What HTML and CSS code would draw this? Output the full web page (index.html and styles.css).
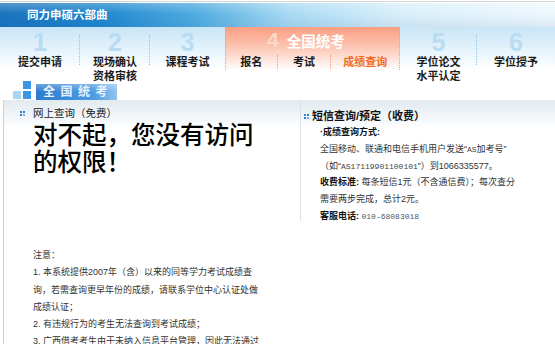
FILE: index.html
```html
<!DOCTYPE html>
<html lang="zh-CN">
<head>
    <meta charset="UTF-8">
    <meta name="viewport" content="width=device-width, initial-scale=1.0">
    <title>成绩查询</title>
    <link rel="stylesheet" href="styles.css">
</head>
<body>

    <div class="topbar">
        <div class="bar"><span class="title">同力申硕六部曲</span></div>
    </div>

    <div class="steps">
        <div class="step w1 sep">
            <div class="num">1</div>
            <div class="label">提交申请</div>
        </div>
        <div class="step w2 sep">
            <div class="num">2</div>
            <div class="label">现场确认<br>资格审核</div>
        </div>
        <div class="step w3">
            <div class="num">3</div>
            <div class="label">课程考试</div>
        </div>
        <div class="step step-cur">
            <div class="cur-title"><span class="num">4</span>全国统考</div>
            <div class="subs">
                <span class="sub">报名</span>
                <span class="sub">考试</span>
                <span class="sub on">成绩查询</span>
            </div>
        </div>
        <div class="step w5 sep">
            <div class="num">5</div>
            <div class="label">学位论文<br>水平认定</div>
        </div>
        <div class="step w6">
            <div class="num">6</div>
            <div class="label">学位授予</div>
        </div>
    </div>

    <div class="section-title">
        <span class="blocks"><i></i><i class="light"></i><i></i></span>
        <span class="title-box">全国统考</span>
    </div>

    <div class="content">
        <div class="col-left">
            <h3 class="box-head"><span class="dot"></span>网上查询（免费）</h3>
            <p class="denied">对不起，您没有访问的权限！</p>

            <div class="notes">
                注意：<br>
                1. 本系统提供2007年（含）以来的同等学力考试成绩查询，若需查询更早年份的成绩，请联系学位中心认证处做成绩认证；<br>
                2. 有违规行为的考生无法查询到考试成绩；<br>
                3. 广西借考考生由于未纳入信息平台管理，因此无法通过
            </div>
        </div>

        <div class="col-right">
            <h3 class="box-head big"><span class="dot"></span>短信查询/预定（收费）</h3>
            <div class="sms">
                <p><b>·成绩查询方式:</b></p>
                <p>全国移动、联通和电信手机用户发送“<span class="mono">AS</span>加考号”</p>
                <p>（如“<span class="mono">AS17119901100101</span>”）到1066335577。</p>
                <p><b>收费标准:</b> 每条短信1元（不含通信费）；每次查分需要两步完成，总计2元。</p>
                <p><b>客服电话:</b> <span class="mono tel">010-68083018</span></p>
            </div>
        </div>
    </div>

</body>
</html>
```

FILE: styles.css
```css
body {
    margin: 0;
    font-family: "Liberation Sans", "Noto Sans CJK SC", sans-serif;
    color: #333;
    background: #fff;
    width: 555px;
    overflow: hidden;
}

/* top title bar */
.topbar {
    margin-top: 1px;
    border-top: 1px solid #d4d4d4;
    padding-top: 1px;
}
.bar {
    height: 24px;
    background:
        linear-gradient(rgba(255, 255, 255, 0.25), rgba(255, 255, 255, 0) 45%, rgba(0, 60, 140, 0.08)),
        linear-gradient(to right, #1a74bd 0%, #1f88cf 18%, #4fabe0 35%, #a9daf3 52%, #d9effa 72%, #eef8fd 100%);
}
.title {
    display: inline-block;
    margin-left: 27px;
    line-height: 24px;
    font-size: 11.5px;
    font-weight: bold;
    color: #fff;
}

/* steps */
.steps {
    display: flex;
    height: 53px;
    background: linear-gradient(#c8e5f6, #e3f2fb 40%, #fff 80%);
}
.step {
    position: relative;
    box-sizing: border-box;
    text-align: center;
}
.w1 { width: 80px; }
.w2 { width: 70px; }
.w3 { width: 75px; }
.w5 { width: 77px; }
.w6 { width: 78px; }
.sep::after {
    content: "";
    position: absolute;
    right: 0;
    top: 8px;
    height: 30px;
    border-right: 1px dotted #95c3df;
}
.num {
    height: 28px;
    padding-top: 2px;
    box-sizing: border-box;
    font-size: 25px;
    line-height: 26px;
    font-weight: bold;
    color: #b9dcf2;
}
.label {
    font-size: 11px;
    font-weight: bold;
    line-height: 14px;
    color: #1a1a1a;
}

.step-cur {
    width: 175px;
    border-left: 1px dotted #f29c7c;
    border-right: 1px dotted #f29c7c;
    height: 43px;
    background: linear-gradient(#fa9e82, #fcbfac 40%, #fde4db 75%, #fff);
}
.cur-title {
    height: 28px;
    line-height: 28px;
    font-size: 14.5px;
    font-weight: bold;
    color: #fff;
    text-align: left;
    padding-left: 41px;
}
.cur-title .num {
    display: inline;
    font-size: 21px;
    color: #fcd8ca;
    margin-right: 8px;
}
.subs {
    display: flex;
}
.sub {
    font-size: 11px;
    font-weight: bold;
    line-height: 14px;
    color: #1a1a1a;
    text-align: center;
}
.sub:nth-child(1) { width: 51px; }
.sub:nth-child(2) { width: 53px; border-left: 1px dotted #f29c7c; }
.sub:nth-child(3) { width: 68px; border-left: 1px dotted #f29c7c; }
.sub.on { color: #f26a1b; }

/* section title */
.section-title {
    display: flex;
    align-items: flex-end;
    height: 20px;
    padding-left: 13px;
}
.blocks {
    display: grid;
    grid-template-columns: 8px 8px;
    grid-template-rows: 8px 8px;
    gap: 2px;
    width: 18px;
    margin-bottom: 1px;
}
.blocks i {
    background: #3b97e6;
}
.blocks i:first-child {
    grid-column: 2;
}
.blocks i.light {
    background: #a9d6f7;
}
.title-box {
    margin-left: 5px;
    width: 81px;
    height: 16px;
    line-height: 16px;
    padding-left: 7px;
    box-sizing: border-box;
    font-size: 12px;
    font-weight: bold;
    letter-spacing: 5.5px;
    color: #e6f3ff;
    background: linear-gradient(to bottom, rgba(255, 255, 255, 0.3), rgba(255, 255, 255, 0) 50%),
        linear-gradient(to right, #2b7bd0, #4d9be0 70%, #8ec3ee);
}

/* content */
.content {
    display: flex;
    margin-left: 3px;
    border-left: 1px solid #c8d2db;
    min-height: 245px;
    background: linear-gradient(#e2eaf0, #f3f7fa 18px, #fff 28px);
}
.col-left {
    width: 296px;
}
.col-right {
    flex: 1;
    border-left: 1px solid #dbe2e8;
    align-self: flex-start;
    height: 121px;
}
.box-head {
    display: flex;
    align-items: center;
    margin: 0;
    padding: 7px 0 0 16px;
    font-size: 10.5px;
    font-weight: normal;
    line-height: 12px;
    color: #222;
}
.box-head.big {
    padding: 10px 0 0 3px;
    font-size: 11px;
    font-weight: bold;
    color: #111;
}
.dot {
    width: 5px;
    height: 5px;
    margin-right: 8px;
    background:
        linear-gradient(to right, #2f7fcf 2px, transparent 2px, transparent 3px, #2f7fcf 3px) top / 5px 2px no-repeat,
        linear-gradient(to right, #2f7fcf 2px, transparent 2px, transparent 3px, #75b3ea 3px) bottom / 5px 2px no-repeat;
}
.box-head.big .dot {
    margin-right: 3px;
}
.denied {
    margin: 3px 0 0 29px;
    width: 232px;
    font-size: 24.5px;
    line-height: 27px;
    font-weight: 500;
    color: #000;
}
.notes {
    margin: 71px 0 0 29px;
    width: 228px;
    font-size: 9px;
    line-height: 17.3px;
    color: #333;
}
.sms {
    padding: 2px 0 0 19px;
    width: 200px;
    font-size: 9px;
    line-height: 16.8px;
    color: #333;
}
.sms p {
    margin: 0;
}
.sms b {
    color: #111;
}
.mono {
    font-family: "Liberation Mono", monospace;
    font-size: 8px;
    line-height: 1;
    color: #444;
}
.tel {
    color: #4a5a70;
}
```
